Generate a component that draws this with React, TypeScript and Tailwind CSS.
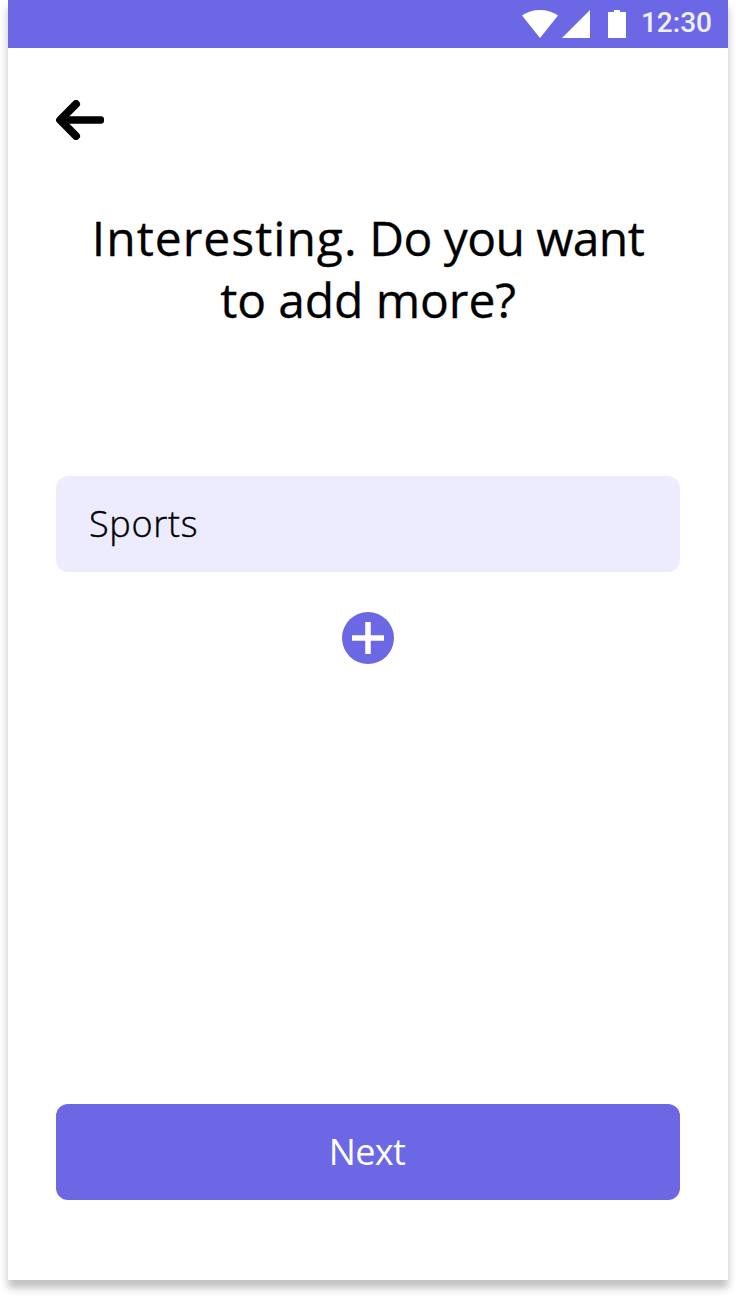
function StatusBar() {
  return (
    <header className="flex h-12 shrink-0 items-start justify-end bg-[#6c68e5] pr-4 text-white">
      <svg className="mr-[-1px] h-12 w-[120px]" viewBox="0 0 120 48" fill="currentColor" aria-hidden="true">
        <path d="M18 38 0 15.600C5 12 11.200 10 18 10s13 2 18 5.600Z" />
        <path d="M40 38 68 10v28Z" />
        <path d="M86 12h6v-2h6v2h6v26H86Z" />
      </svg>
      <span className="font-[Roboto,sans-serif] text-[28px] leading-[46px] font-medium text-white/90">12:30</span>
    </header>
  );
}

function ArrowLeft() {
  return (
    <svg className="h-10 w-12" viewBox="0 0 48 40" aria-hidden="true">
      <path d="M20 4 4.200 20 20 36" fill="none" stroke="#000" strokeWidth="8" strokeLinecap="round" strokeLinejoin="round" />
      <rect x="6" y="16.200" width="42" height="7.600" rx="3" />
    </svg>
  );
}

export default function App() {
  return (
    <div className="h-[1296px] w-[736px] overflow-hidden bg-white px-2 pb-4 font-['Open_Sans',sans-serif] text-black">
      <div className="flex h-full flex-col bg-white shadow-[0_8px_8px_rgba(0,0,0,0.25)]">
        <StatusBar />
        <main className="flex flex-1 flex-col px-12 pt-[52px] pb-20">
          <button type="button" aria-label="Back" className="w-12">
            <ArrowLeft />
          </button>
          <h1 className="mt-[67px] text-center text-[48px] leading-[62px] [-webkit-text-stroke:0.3px_black]">
            <span className="block whitespace-nowrap">
              <span className="tracking-[1px]">Interesting.</span>
              <span className="tracking-[-0.6px]"> Do you want</span>
            </span>
            <span className="block tracking-[-0.1px] whitespace-nowrap">to add more?</span>
          </h1>
          <div className="mt-[145px] flex h-24 items-center rounded-xl bg-[#edecfe] px-[33px] text-[36px] font-light tracking-[0.7px] [-webkit-text-stroke:0.4px_black]">
            <span>Sports</span>
          </div>
          <button type="button" aria-label="Add" className="mx-auto mt-10 size-[52px]">
            <svg viewBox="0 0 52 52" aria-hidden="true">
              <circle cx="26" cy="26" r="26" fill="#6c68e5" />
              <path d="M26 10v32M10 26h32" stroke="#fff" strokeWidth="5.500" />
            </svg>
          </button>
          <button type="button" className="mt-auto flex h-24 items-center justify-center rounded-xl bg-[#6c68e5] pr-0.5 text-[36px] tracking-[-0.6px] text-white">
            <span>Next</span>
          </button>
        </main>
      </div>
    </div>
  );
}
